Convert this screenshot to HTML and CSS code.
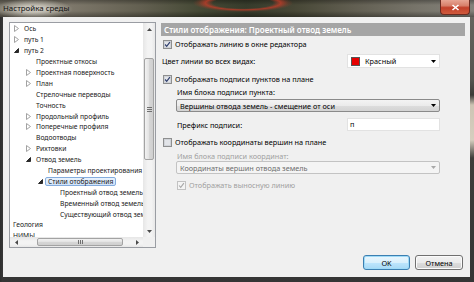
FILE: index.html
```html
<!DOCTYPE html>
<html>
<head>
<meta charset="utf-8">
<link rel="stylesheet" href="styles.css">
</head>
<body>
<div class="window">
  <div class="titlebar">
    <span class="title">Настройка среды</span>
    <div class="close"><svg width="9" height="7" viewBox="0 0 9 7"><path d="M1.5 1 L7.5 6 M7.5 1 L1.5 6" stroke="#fff" stroke-width="1.6"/></svg></div>
  </div>
  <div class="client">
    <div class="main">
      <div class="tree">
        <div class="tree-items">
          <div class="row l0"><span class="exp"><svg width="5" height="7" viewBox="0 0 5 7"><path d="M0.5 0.5 L4.5 3.5 L0.5 6.5 Z" fill="none" stroke="#a3a3a3"/></svg></span><span class="lbl">Ось</span></div>
          <div class="row l0"><span class="exp"><svg width="5" height="7" viewBox="0 0 5 7"><path d="M0.5 0.5 L4.5 3.5 L0.5 6.5 Z" fill="none" stroke="#a3a3a3"/></svg></span><span class="lbl">путь 1</span></div>
          <div class="row l0"><span class="exp"><svg width="5" height="5" viewBox="0 0 5 5"><path d="M4.5 0.5 L4.5 4.5 L0.5 4.5 Z" fill="#2a2a2a" stroke="#2a2a2a"/></svg></span><span class="lbl">путь 2</span></div>
          <div class="row l1"><span class="exp"></span><span class="lbl">Проектные откосы</span></div>
          <div class="row l1"><span class="exp"><svg width="5" height="7" viewBox="0 0 5 7"><path d="M0.5 0.5 L4.5 3.5 L0.5 6.5 Z" fill="none" stroke="#a3a3a3"/></svg></span><span class="lbl">Проектная поверхность</span></div>
          <div class="row l1"><span class="exp"><svg width="5" height="7" viewBox="0 0 5 7"><path d="M0.5 0.5 L4.5 3.5 L0.5 6.5 Z" fill="none" stroke="#a3a3a3"/></svg></span><span class="lbl">План</span></div>
          <div class="row l1"><span class="exp"></span><span class="lbl">Стрелочные переводы</span></div>
          <div class="row l1"><span class="exp"></span><span class="lbl">Точность</span></div>
          <div class="row l1"><span class="exp"><svg width="5" height="7" viewBox="0 0 5 7"><path d="M0.5 0.5 L4.5 3.5 L0.5 6.5 Z" fill="none" stroke="#a3a3a3"/></svg></span><span class="lbl">Продольный профиль</span></div>
          <div class="row l1"><span class="exp"><svg width="5" height="7" viewBox="0 0 5 7"><path d="M0.5 0.5 L4.5 3.5 L0.5 6.5 Z" fill="none" stroke="#a3a3a3"/></svg></span><span class="lbl">Поперечные профиля</span></div>
          <div class="row l1"><span class="exp"></span><span class="lbl">Водоотводы</span></div>
          <div class="row l1"><span class="exp"><svg width="5" height="7" viewBox="0 0 5 7"><path d="M0.5 0.5 L4.5 3.5 L0.5 6.5 Z" fill="none" stroke="#a3a3a3"/></svg></span><span class="lbl">Рихтовки</span></div>
          <div class="row l1"><span class="exp"><svg width="5" height="5" viewBox="0 0 5 5"><path d="M4.5 0.5 L4.5 4.5 L0.5 4.5 Z" fill="#2a2a2a" stroke="#2a2a2a"/></svg></span><span class="lbl">Отвод земель</span></div>
          <div class="row l2"><span class="exp"></span><span class="lbl">Параметры проектирования</span></div>
          <div class="row l2"><span class="exp"><svg width="5" height="5" viewBox="0 0 5 5"><path d="M4.5 0.5 L4.5 4.5 L0.5 4.5 Z" fill="#2a2a2a" stroke="#2a2a2a"/></svg></span><span class="lbl sel">Стили отображения</span></div>
          <div class="row l3"><span class="exp"></span><span class="lbl">Проектный отвод земель</span></div>
          <div class="row l3"><span class="exp"></span><span class="lbl">Временный отвод земель</span></div>
          <div class="row l3"><span class="exp"></span><span class="lbl">Существующий отвод земель</span></div>
          <div class="row root"><span class="lbl">Геология</span></div>
          <div class="row root"><span class="lbl">НИМЫ</span></div>
        </div>
        <div class="vscroll">
          <div class="sbtn"><svg width="5" height="3" viewBox="0 0 5 3"><path d="M0 3 L2.5 0 L5 3 Z" fill="#4a4a4a"/></svg></div>
          <div class="vtrack"><div class="vthumb"><span class="vgrip"></span></div></div>
          <div class="sbtn"><svg width="5" height="3" viewBox="0 0 5 3"><path d="M0 0 L2.5 3 L5 0 Z" fill="#4a4a4a"/></svg></div>
        </div>
        <div class="hscroll">
          <div class="sbtn"><svg width="3" height="5" viewBox="0 0 3 5"><path d="M3 0 L0 2.5 L3 5 Z" fill="#4a4a4a"/></svg></div>
          <div class="htrack"><div class="hthumb"><span class="hgrip"></span></div></div>
          <div class="sbtn"><svg width="3" height="5" viewBox="0 0 3 5"><path d="M0 0 L3 2.5 L0 5 Z" fill="#4a4a4a"/></svg></div>
        </div>
        <div class="corner"></div>
      </div>
      <div class="panel">
        <div class="header">Стили отображения: Проектный отвод земель</div>
        <div class="form">
          <div class="cbrow r-cb1">
            <svg class="cb" width="9" height="9" viewBox="0 0 9 9"><rect x="0.5" y="0.5" width="8" height="8" fill="#f6f6f6" stroke="#8e8f8f"/><rect x="1.5" y="1.5" width="6" height="6" fill="#e2e4e8" stroke="#d0d3d8"/><path d="M2.1 4.5 L3.7 6.3 L6.9 2.1" fill="none" stroke="#2f3f6e" stroke-width="1.2"/></svg>
            <span>Отображать линию в окне редактора</span>
          </div>
          <div class="fieldrow r-color">
            <span class="flabel">Цвет линии во всех видах:</span>
            <div class="colorbox"><span class="swatch"></span><span class="ctext">Красный</span><svg class="arr" width="5" height="3" viewBox="0 0 5 3"><path d="M0 0 L2.5 3 L5 0 Z" fill="#000"/></svg></div>
          </div>
          <div class="cbrow r-cb2">
            <svg class="cb" width="9" height="9" viewBox="0 0 9 9"><rect x="0.5" y="0.5" width="8" height="8" fill="#f6f6f6" stroke="#8e8f8f"/><rect x="1.5" y="1.5" width="6" height="6" fill="#e2e4e8" stroke="#d0d3d8"/><path d="M2.1 4.5 L3.7 6.3 L6.9 2.1" fill="none" stroke="#2f3f6e" stroke-width="1.2"/></svg>
            <span>Отображать подписи пунктов на плане</span>
          </div>
          <div class="sub">
            <div class="slabel r-l1">Имя блока подписи пункта:</div>
            <div class="combo r-combo1"><span>Вершины отвода земель - смещение от оси</span><svg class="arr" width="5" height="3" viewBox="0 0 5 3"><path d="M0 0 L2.5 3 L5 0 Z" fill="#000"/></svg></div>
            <div class="fieldrow r-prefix">
              <span class="slabel">Префикс подписи:</span>
              <div class="textbox">п</div>
            </div>
          </div>
          <div class="cbrow r-cb3">
            <svg class="cb" width="9" height="9" viewBox="0 0 9 9"><rect x="0.5" y="0.5" width="8" height="8" fill="#f6f6f6" stroke="#8e8f8f"/><rect x="1.5" y="1.5" width="6" height="6" fill="#e2e4e8" stroke="#d0d3d8"/></svg>
            <span>Отображать координаты вершин на плане</span>
          </div>
          <div class="sub">
            <div class="slabel disabled r-l2">Имя блока подписи координат:</div>
            <div class="combo dis"><span>Координаты вершин отвода земель</span><svg class="arr" width="5" height="3" viewBox="0 0 5 3"><path d="M0 0 L2.5 3 L5 0 Z" fill="#a8a8a8"/></svg></div>
            <div class="cbrow r-cb4">
              <svg class="cb" width="9" height="9" viewBox="0 0 9 9"><rect x="0.5" y="0.5" width="8" height="8" fill="#f4f4f4" stroke="#c2c2c2"/><path d="M2.1 4.5 L3.7 6.3 L6.9 2.1" fill="none" stroke="#a8a8a8" stroke-width="1.1"/></svg>
              <span class="disabled">Отображать выносную линию</span>
            </div>
          </div>
        </div>
      </div>
    </div>
    <div class="buttons">
      <div class="btn default">OK</div>
      <div class="btn">Отмена</div>
    </div>
  </div>
</div>
</body>
</html>
```
FILE: styles.css
```css
* { box-sizing: border-box; }
body {
  margin: 0;
  font-family: "Noto Sans", "DejaVu Sans", sans-serif;
  font-size: 7.3px;
  color: #000;
  overflow: hidden;
}
.window {
  width: 474px;
  height: 282px;
  display: flex;
  flex-direction: column;
  background:
    linear-gradient(to right, #2e2e2e 0, #383838 3px, transparent 3px),
    linear-gradient(to bottom, #6a6862 0, #55544f 80px, #3c3b38 95px, #cdc4b4 105px, #d6cebf 140px, #3e3d3a 158px, #353535 100%);
}
.titlebar {
  height: 17px;
  display: flex;
  justify-content: space-between;
  align-items: flex-start;
  padding-left: 3px;
  background:
    radial-gradient(ellipse 50px 9px at 243px 3px, transparent 60%, rgba(200, 60, 40, 0.75) 75%, rgba(200, 60, 40, 0.2) 90%, transparent 100%),
    radial-gradient(ellipse 40px 10px at 33px 9px, rgba(235, 232, 222, 0.7) 30%, rgba(235, 232, 222, 0) 100%),
    linear-gradient(to bottom, rgba(0, 0, 0, 0.3) 0, rgba(0, 0, 0, 0) 5px, rgba(0, 0, 0, 0) 11px, rgba(0, 0, 0, 0.35) 17px),
    linear-gradient(90deg, #6e6a5e 0%, #7d776a 15%, #625f50 30%, #454935 42%, #363b2b 52%, #474736 62%, #625f52 75%, #77746a 88%, #83817a 100%);
}
.title {
  line-height: 16px;
  font-size: 7.9px;
  color: #111;
}
.close {
  width: 30px;
  height: 15px;
  margin-right: 4px;
  border: 1px solid #6b2a20;
  border-top: none;
  border-radius: 0 0 4px 4px;
  background: linear-gradient(to bottom, #e7a593 0, #d8806b 40%, #c2402a 55%, #cf5a3d 100%);
  display: flex;
  align-items: center;
  justify-content: center;
}
.client {
  flex: 1;
  margin: 0 4px 5px 3px;
  background: #f0f0f0;
  display: flex;
  flex-direction: column;
  padding: 5px 5px 7px 6px;
}
.main {
  display: flex;
  gap: 5px;
  height: 226px;
}
.tree {
  width: 147px;
  height: 226px;
  flex: none;
  border: 1px solid #9a9da3;
  background: #fff;
  display: grid;
  grid-template-columns: 133px 12px;
  grid-template-rows: 214px 10px;
}
.tree-items {
  overflow: hidden;
  padding-top: 0.5px;
  font-size: 6.75px;
}
.row {
  height: 10.9px;
  display: flex;
  align-items: center;
  white-space: nowrap;
  color: #1a1a1a;
}
.row.l0 { padding-left: 2px; }
.row.l1 { padding-left: 14px; }
.row.l2 { padding-left: 26px; }
.row.l3 { padding-left: 38px; }
.row.root { padding-left: 0; }
.exp {
  width: 9px;
  flex: none;
  display: flex;
  align-items: center;
  justify-content: center;
}
.lbl {
  display: inline-block;
  height: 9px;
  line-height: 8px;
  padding: 0 2px;
  border: 1px solid transparent;
  border-radius: 2px;
}
.lbl.sel {
  border-color: #84acdd;
  background: linear-gradient(to bottom, #eaf3fd, #cfe3fb);
}
.vscroll {
  display: flex;
  flex-direction: column;
  background: linear-gradient(to right, #e6e6e6, #f3f3f3 40%, #f3f3f3 70%, #e8e8e8);
}
.sbtn {
  flex: none;
  width: 12px;
  height: 12px;
  display: flex;
  align-items: center;
  justify-content: center;
}
.hscroll .sbtn { height: 10px; }
.vtrack {
  flex: 1;
  padding-top: 23px;
  padding-left: 1px;
  padding-right: 1px;
}
.vthumb {
  height: 102px;
  border: 1px solid #a3a3a3;
  border-radius: 2px;
  background: linear-gradient(to right, #f2f2f2, #e2e2e2 50%, #d6d6d6 51%, #cfcfcf);
  display: flex;
  align-items: center;
  justify-content: center;
}
.vgrip {
  width: 5px;
  height: 5px;
  background: repeating-linear-gradient(to bottom, #707070 0, #707070 1px, transparent 1px, transparent 2px);
}
.hscroll {
  display: flex;
  background: linear-gradient(to bottom, #e6e6e6, #f3f3f3 40%, #f3f3f3 70%, #e8e8e8);
}
.htrack {
  flex: 1;
  padding-left: 15px;
  padding-top: 1px;
  padding-bottom: 1px;
}
.hthumb {
  width: 86px;
  height: 100%;
  border: 1px solid #a3a3a3;
  border-radius: 2px;
  background: linear-gradient(to bottom, #f2f2f2, #e2e2e2 50%, #d6d6d6 51%, #cfcfcf);
  display: flex;
  align-items: center;
  justify-content: center;
}
.hgrip {
  width: 5px;
  height: 4px;
  background: repeating-linear-gradient(to right, #707070 0, #707070 1px, transparent 1px, transparent 2px);
}
.corner { background: #f0f0f0; }
.panel {
  flex: 1;
  display: flex;
  flex-direction: column;
}
.header {
  margin-top: 1px;
  height: 13px;
  line-height: 13px;
  background: #a5a5a5;
  color: #fff;
  padding-left: 3px;
  font-size: 8px;
  font-weight: 600;
  white-space: nowrap;
}
.form {
  width: 279px;
  display: flex;
  flex-direction: column;
}
.cbrow {
  height: 10px;
  display: flex;
  align-items: center;
  gap: 3px;
  padding-left: 2px;
  white-space: nowrap;
}
.cb { flex: none; }
.r-cb1 { margin-top: 3px; }
.r-color { margin-top: 5px; }
.r-cb2 { margin-top: 6px; }
.r-cb3 { margin-top: 6px; }
.r-cb4 { margin-top: 6px; padding-left: 1px; }
.fieldrow {
  height: 14px;
  display: flex;
  justify-content: space-between;
  align-items: center;
}
.flabel { padding-left: 1px; }
.colorbox {
  width: 93px;
  height: 14px;
  background: #fff;
  border: 1px solid #e2e2e2;
  display: flex;
  align-items: center;
  padding-left: 3px;
  padding-right: 3px;
}
.swatch {
  width: 9px;
  height: 9px;
  background: #e60000;
  border: 1px solid #555;
  flex: none;
}
.ctext { flex: 1; padding-left: 5px; }
.arr { flex: none; }
.sub {
  padding-left: 15px;
  display: flex;
  flex-direction: column;
}
.slabel {
  padding-left: 1px;
  height: 10px;
  line-height: 10px;
  white-space: nowrap;
}
.r-l1 { margin-top: 3px; }
.r-l2 { margin-top: 4px; }
.combo {
  height: 13px;
  border: 1px solid #8a8a8a;
  border-radius: 2px;
  background: linear-gradient(to bottom, #f3f3f3, #ebebeb 50%, #dddddd 51%, #d3d3d3);
  display: flex;
  align-items: center;
  justify-content: space-between;
  padding: 0 3px 0 3px;
  white-space: nowrap;
}
.r-combo1 { margin-top: 2px; }
.combo.dis {
  background: #f4f4f4;
  border-color: #c3c3c3;
  color: #6d6d6d;
}
.r-prefix { margin-top: 6px; height: 13px; }
.textbox {
  width: 93px;
  height: 13px;
  background: #fff;
  border: 1px solid #e2e2e2;
  padding-left: 2px;
  line-height: 11px;
}
.disabled { color: #a0a0a0; }
.buttons {
  display: flex;
  justify-content: flex-end;
  gap: 5px;
  margin-top: 7px;
  padding-right: 2px;
}
.btn {
  width: 48px;
  height: 15px;
  border: 1px solid #707070;
  border-radius: 3px;
  background: linear-gradient(to bottom, #f2f2f2, #ebebeb 50%, #dddddd 51%, #cfcfcf);
  display: flex;
  align-items: center;
  justify-content: center;
  box-shadow: inset 0 0 0 1px #fbfbfb;
}
.btn.default {
  width: 47px;
  border-color: #3c7fb1;
  box-shadow: inset 0 0 0 1px #9fdbf8;
  background: linear-gradient(to bottom, #eaf6fd, #d9f0fc 50%, #bee6fd 51%, #a7d9f5);
}
```
